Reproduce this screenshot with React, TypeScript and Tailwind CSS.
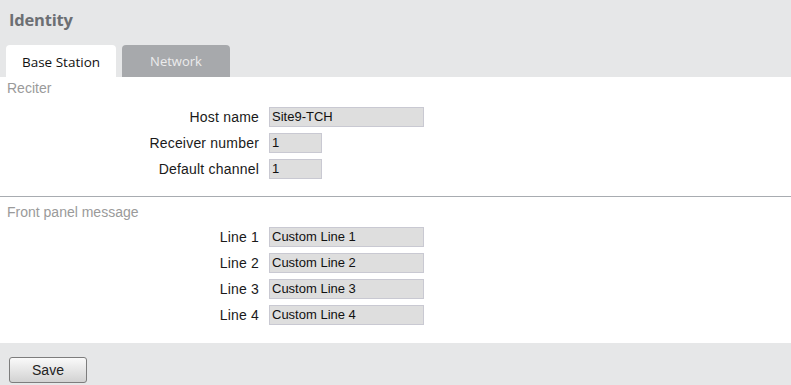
const reciter = [
  ['Host name', 'Site9-TCH', 'w-[155px]'],
  ['Receiver number', '1', 'w-[53px]'],
  ['Default channel', '1', 'w-[53px]'],
]

const lines = ['Line 1', 'Line 2', 'Line 3', 'Line 4']

function Field({ label, value, width }: { label: string; value: string; width: string }) {
  return (
    <div className="flex h-[20px] items-center">
      <span className="w-[259px] text-right text-[14px] leading-[20px] tracking-[0.2px] text-[#1a1a1a]">{label}</span>
      <div
        className={`ml-[10px] h-[20px] ${width} border border-[#c9c9d2] bg-[#dedede] pl-[2px] text-[13px] leading-[18px] text-[#111]`}
      >
        {value}
      </div>
    </div>
  )
}

export default function App() {
  return (
    <div className="h-[385px] w-[791px] overflow-hidden bg-white font-['Liberation_Sans',Arial,sans-serif]">
      <header className="flex h-[77px] flex-col bg-[#e6e7e8]">
        <h1 className="h-[45px] pl-[9px] pt-[8px] font-['Open_Sans',sans-serif] text-[16.5px] font-bold leading-[24px] tracking-[-0.2px] text-[#6c6f73]">
          Identity
        </h1>
        <nav className="flex h-[32px] gap-[6px] pl-[6px]">
          <div className="flex w-[110px] items-center justify-center rounded-t-[4px] bg-white pt-[2px] font-['Open_Sans',sans-serif] text-[13.5px] text-[#111]">
            Base Station
          </div>
          <div className="flex w-[108px] items-center justify-center rounded-t-[4px] bg-[#a7a9ac] pt-[2px] font-['Open_Sans',sans-serif] text-[13px] text-[#ececec]">
            Network
          </div>
        </nav>
      </header>

      <main className="flex h-[266px] flex-col">
        <section className="pt-[4px]">
          <h2 className="pl-[7px] text-[14px] leading-[15px] text-[#9a9a9a]">Reciter</h2>
          <div className="mt-[11px] flex flex-col gap-[6px]">
            {reciter.map(([label, value, width]) => (
              <Field key={label} label={label} value={value} width={width} />
            ))}
          </div>
        </section>
        <hr className="mt-[17px] border-0 border-t border-[#a8acb1]" />
        <section className="pt-[8px]">
          <h2 className="pl-[7px] text-[14px] leading-[15px] text-[#9a9a9a]">Front panel message</h2>
          <div className="mt-[7px] flex flex-col gap-[6px]">
            {lines.map((l, i) => (
              <Field key={l} label={l} value={`Custom Line ${i + 1}`} width="w-[155px]" />
            ))}
          </div>
        </section>
      </main>

      <footer className="h-[42px] bg-[#e6e7e8] pl-[9px] pt-[14px]">
        <button className="h-[26px] w-[78px] rounded-[3px] border border-[#7d7d7d] bg-gradient-to-b from-[#fafafa] to-[#d2d2d2] text-[14px] text-[#222]">
          Save
        </button>
      </footer>
    </div>
  )
}
